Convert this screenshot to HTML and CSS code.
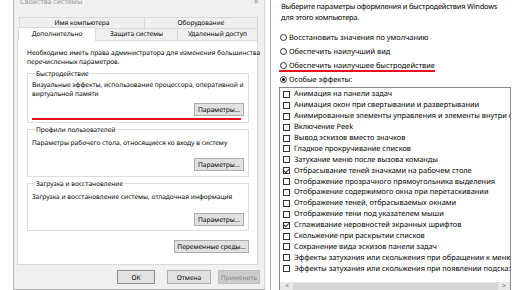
FILE: index.html
```html
<!DOCTYPE html>
<html lang="ru">
<head>
  <meta charset="UTF-8">
  <meta name="viewport" content="width=device-width, initial-scale=1.0">
  <title>Свойства системы</title>
  <link rel="stylesheet" href="styles.css">
</head>
<body>
  <div class="screen">
    <div class="sysprops">
      <div class="titlebar">
        <span>Свойства системы</span>
        <span class="close">✕</span>
      </div>

      <div class="tabs">
        <div class="tabrow back">
          <div class="tab t-name">Имя компьютера</div>
          <div class="tab t-hw">Оборудование</div>
        </div>
        <div class="tabrow front">
          <div class="tab t-adv active">Дополнительно</div>
          <div class="tab t-prot">Защита системы</div>
          <div class="tab t-remote">Удаленный доступ</div>
        </div>
      </div>

      <div class="panel">
        <p class="note">Необходимо иметь права администратора для изменения большинства<br>перечисленных параметров.</p>

        <fieldset class="group g-perf">
          <legend>Быстродействие</legend>
          <p>Визуальные эффекты, использование процессора, оперативной и<br>виртуальной памяти</p>
          <div class="group-actions"><button class="btn">Параметры...</button></div>
          <div class="mark"></div>
        </fieldset>

        <fieldset class="group g-prof">
          <legend>Профили пользователей</legend>
          <p>Параметры рабочего стола, относящиеся ко входу в систему</p>
          <div class="group-actions"><button class="btn">Параметры...</button></div>
        </fieldset>

        <fieldset class="group g-boot">
          <legend>Загрузка и восстановление</legend>
          <p>Загрузка и восстановление системы, отладочная информация</p>
          <div class="group-actions"><button class="btn">Параметры...</button></div>
        </fieldset>

        <div class="env-row"><button class="btn btn-env">Переменные среды...</button></div>
      </div>

      <div class="dialog-buttons">
        <button class="btn btn-ok">ОК</button>
        <button class="btn btn-cancel">Отмена</button>
        <button class="btn btn-apply" disabled>Применить</button>
      </div>
    </div>

    <div class="effects">
      <p class="intro">Выберите параметры оформления и быстродействия Windows<br>для этого компьютера.</p>

      <div class="radios">
        <div class="radio"><span class="dot"></span>Восстановить значения по умолчанию</div>
        <div class="radio"><span class="dot"></span>Обеспечить наилучший вид</div>
        <div class="radio marked"><span class="dot"></span>Обеспечить наилучшее быстродействие</div>
        <div class="radio"><span class="dot on"></span>Особые эффекты:</div>
      </div>

      <div class="list">
        <div class="item"><span class="cb"></span>Анимация на панели задач</div>
        <div class="item"><span class="cb"></span>Анимация окон при свертывании и развертывании</div>
        <div class="item"><span class="cb"></span>Анимированные элементы управления и элементы внутри окон</div>
        <div class="item"><span class="cb"></span>Включение Peek</div>
        <div class="item"><span class="cb"></span>Вывод эскизов вместо значков</div>
        <div class="item"><span class="cb"></span>Гладкое прокручивание списков</div>
        <div class="item"><span class="cb"></span>Затухание меню после вызова команды</div>
        <div class="item"><span class="cb on"></span>Отбрасывание теней значками на рабочем столе</div>
        <div class="item"><span class="cb"></span>Отображение прозрачного прямоугольника выделения</div>
        <div class="item"><span class="cb"></span>Отображение содержимого окна при перетаскивании</div>
        <div class="item"><span class="cb"></span>Отображение теней, отбрасываемых окнами</div>
        <div class="item"><span class="cb"></span>Отображение тени под указателем мыши</div>
        <div class="item"><span class="cb on"></span>Сглаживание неровностей экранных шрифтов</div>
        <div class="item"><span class="cb"></span>Скольжение при раскрытии списков</div>
        <div class="item"><span class="cb"></span>Сохранение вида эскизов панели задач</div>
        <div class="item"><span class="cb"></span>Эффекты затухания или скольжения при обращении к меню</div>
        <div class="item"><span class="cb"></span>Эффекты затухания или скольжения при появлении подсказок</div>

        <div class="hscroll">
          <span class="arrow">&lt;</span>
          <span class="thumb"></span>
          <span class="arrow">&gt;</span>
        </div>
      </div>
    </div>
  </div>
</body>
</html>
```

FILE: styles.css
```css
* {
  margin: 0;
  padding: 0;
  box-sizing: border-box;
}

body {
  font-family: "Noto Sans", "Open Sans", sans-serif;
  text-rendering: geometricPrecision;
  background-color: #fff;
  color: #000;
  overflow: hidden;
}

.screen {
  display: flex;
  height: 290px;
}

/* left window: System properties */

.sysprops {
  width: 252px;
  height: 296px;
  margin-left: 13px;
  margin-top: -6px;
  background-color: #f0f0f0;
  border-left: 1px solid #b4b4b4;
  border-right: 1px solid #d0d0d0;
  border-bottom: 1px solid #b4b4b4;
  font-size: 6.6px;
  display: flex;
  flex-direction: column;
}

.titlebar {
  height: 16px;
  padding: 0 5px 0 6px;
  display: flex;
  align-items: center;
  justify-content: space-between;
  color: #9a9a9a;
  font-size: 7px;
}

.tabs {
  margin: 7px 6px 0 4px;
}

.tabrow {
  display: flex;
}

.tabrow.back {
  height: 11px;
  margin-left: 1px;
}

.tabrow.front {
  height: 12px;
  align-items: flex-end;
}

.tab {
  height: 100%;
  border: 1px solid #d9d9d9;
  border-bottom: none;
  background-color: #f0f0f0;
  text-align: center;
  line-height: 10px;
}

.t-name { width: 125px; border-right: none; }
.t-hw { width: 114px; }
.t-adv { width: 78px; }
.t-prot { width: 82px; border-left: none; }
.t-remote { width: 80px; border-left: none; }

.tab.active {
  position: relative;
  z-index: 1;
  height: 14px;
  margin-bottom: -1px;
  background-color: #fff;
  line-height: 12px;
}

.panel {
  height: 225px;
  margin: 0 6px 0 3px;
  background-color: #fff;
  border: 1px solid #d9d9d9;
}

.note {
  margin: 7px -6px 0 9px;
  line-height: 9px;
  white-space: nowrap;
}

.group {
  margin: 2px 8px 0 9px;
  border: 1px solid #dcdcdc;
  line-height: 9.5px;
  padding: 0 4px 0 4px;
}

.group p {
  margin-right: -3px;
  white-space: nowrap;
}

.group legend {
  margin-left: 3px;
  padding: 0 1px;
  line-height: 9px;
}

.g-perf { margin-top: 3px; padding-top: 1.5px; padding-bottom: 2px; }
.g-perf .group-actions { margin-top: 4px; }
.g-prof, .g-boot { padding-top: 4px; padding-bottom: 5px; }
.g-prof .group-actions,
.g-boot .group-actions { margin-top: 11px; }
.g-boot { padding-bottom: 4px; }

.group-actions {
  display: flex;
  justify-content: flex-end;
}

.mark {
  height: 2px;
  margin: 2px 3px 0 0;
  background-color: #e8121c;
}

.btn {
  font-family: inherit;
  font-size: 6.6px;
  text-rendering: geometricPrecision;
  height: 13px;
  width: 50px;
  background-color: #e1e1e1;
  border: 1px solid #adadad;
  color: #000;
}

.env-row {
  display: flex;
  justify-content: flex-end;
  margin: 9px 8px 0 0;
}

.btn-env { width: 75px; }

.dialog-buttons {
  display: flex;
  justify-content: flex-end;
  margin: 5px 4px 0 0;
}

.dialog-buttons .btn {
  height: 14px;
}

.btn-ok { width: 38px; border-color: #8e8e8e; }
.btn-cancel { width: 44px; margin-left: 12px; }
.btn-apply {
  width: 42px;
  margin-left: 7px;
  background-color: #cccccc;
  border-color: #bfbfbf;
  color: #8a8a8a;
}

/* right window: visual effects */

.effects {
  flex: 1;
  margin-left: 5px;
  padding: 1.5px 0 0 10px;
  border-left: 1px solid #adadad;
  font-size: 7.4px;
  overflow: hidden;
}

.intro {
  line-height: 11px;
  white-space: nowrap;
  letter-spacing: -0.2px;
}

.radios {
  margin-top: 7px;
  margin-left: -1px;
}

.radio {
  height: 14px;
  display: flex;
  align-items: center;
  white-space: nowrap;
}

.radio.marked {
  position: relative;
  width: fit-content;
}

.radio.marked::after {
  content: "";
  position: absolute;
  left: -1px;
  right: 0;
  bottom: 1px;
  height: 2px;
  background-color: #e8121c;
}

.dot {
  width: 7px;
  height: 7px;
  margin-right: 2px;
  border: 1px solid #333;
  border-radius: 50%;
  display: flex;
  align-items: center;
  justify-content: center;
}

.dot.on::after {
  content: "";
  width: 3px;
  height: 3px;
  border-radius: 50%;
  background-color: #000;
}

.list {
  width: 232px;
  height: 210px;
  margin-left: -2px;
  padding-top: 1.5px;
  border: 1px solid #828790;
  overflow: hidden;
}

.item {
  height: 10.9px;
  display: flex;
  align-items: center;
  white-space: nowrap;
}

.cb {
  flex: none;
  width: 7px;
  height: 7px;
  margin: 0 4px 0 3px;
  border: 1px solid #333;
  display: flex;
  align-items: center;
  justify-content: center;
}

.cb.on::after {
  content: "";
  width: 2px;
  height: 4px;
  margin-top: -1px;
  border: solid #333;
  border-width: 0 1px 1px 0;
  transform: rotate(45deg);
}

.hscroll {
  height: 10px;
  margin-top: 8px;
  background-color: #e8e8e8;
  display: flex;
  align-items: center;
  padding: 0 4px 0 5px;
  color: #505050;
  font-size: 7px;
  line-height: 8px;
}

.thumb {
  flex: 1;
  height: 8px;
  margin: 0 4px;
  background-color: #d6d6d6;
}
```
